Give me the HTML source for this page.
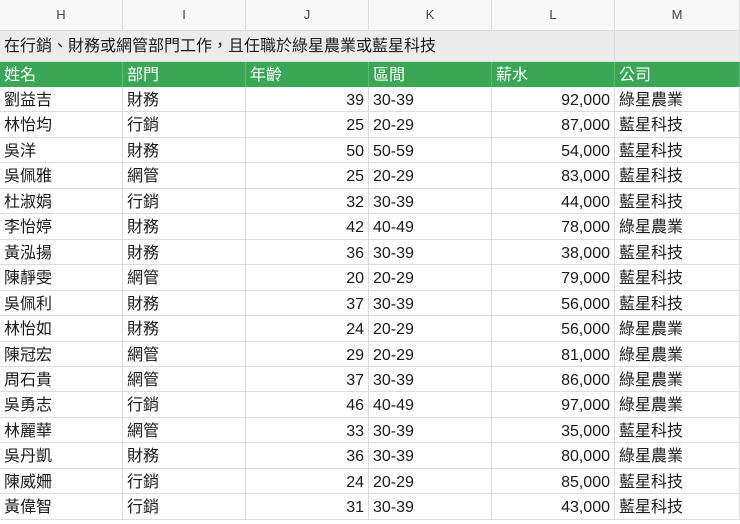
<!DOCTYPE html><html><head><meta charset="utf-8"><style>
body{margin:0;width:740px;height:524px;overflow:hidden;background:#fff;font-family:"Liberation Sans","Noto Sans CJK TC",sans-serif;}
.r{position:absolute;left:0;width:740px;box-sizing:border-box;border-bottom:1px solid #dcdcdc;white-space:nowrap;font-size:0}
.r div{display:inline-block;vertical-align:top;box-sizing:border-box;border-right:1px solid #dcdcdc;padding:2px 4px 0;white-space:nowrap;overflow:hidden;font-size:16px;color:#1a1a1a;height:100%}
.c1,.c2,.c3,.c4,.c5{width:123px}.c6{width:125px}.c3,.c5{text-align:right}
.h div{text-align:center!important;font-size:13px;color:#444;background:#f8f8f8;padding-top:0}
.g div{background:#3aa756;color:#fff;text-align:left!important;border-right:1px solid #5cb874}
</style></head><body>
<div class="r h" style="top:0;height:31px;line-height:30px"><div class="c1">H</div><div class="c2">I</div><div class="c3">J</div><div class="c4">K</div><div class="c5">L</div><div class="c6">M</div></div>
<div class="r" style="top:31px;height:31px;line-height:28px;background:#ececec"><div style="width:615px;overflow:visible">在行銷、財務或網管部門工作，且任職於綠星農業或藍星科技</div><div class="c6"></div></div>
<div class="r g" style="top:62px;height:25px;line-height:23px;border-bottom:none"><div class="c1">姓名</div><div class="c2">部門</div><div class="c3">年齡</div><div class="c4">區間</div><div class="c5">薪水</div><div class="c6">公司</div></div>
<div id="d"></div>
<script>
var rows=[["劉益吉","財務",39,"30-39","92,000","綠星農業"],["林怡均","行銷",25,"20-29","87,000","藍星科技"],["吳洋","財務",50,"50-59","54,000","藍星科技"],["吳佩雅","網管",25,"20-29","83,000","藍星科技"],["杜淑娟","行銷",32,"30-39","44,000","藍星科技"],["李怡婷","財務",42,"40-49","78,000","綠星農業"],["黃泓揚","財務",36,"30-39","38,000","藍星科技"],["陳靜雯","網管",20,"20-29","79,000","藍星科技"],["吳佩利","財務",37,"30-39","56,000","藍星科技"],["林怡如","財務",24,"20-29","56,000","綠星農業"],["陳冠宏","網管",29,"20-29","81,000","綠星農業"],["周石貴","網管",37,"30-39","86,000","綠星農業"],["吳勇志","行銷",46,"40-49","97,000","綠星農業"],["林麗華","網管",33,"30-39","35,000","藍星科技"],["吳丹凱","財務",36,"30-39","80,000","綠星農業"],["陳威姍","行銷",24,"20-29","85,000","藍星科技"],["黃偉智","行銷",31,"30-39","43,000","藍星科技"]];
var h="";rows.forEach(function(r,i){var t=Math.round(87+i*25.45),b=Math.round(87+(i+1)*25.45);h+='<div class="r" style="top:'+t+'px;height:'+(b-t)+'px;line-height:'+(b-t-2)+'px">';r.forEach(function(c,j){h+='<div class="c'+(j+1)+'">'+c+'</div>'});h+='</div>'});
document.getElementById("d").innerHTML=h;
</script>
</body></html>
